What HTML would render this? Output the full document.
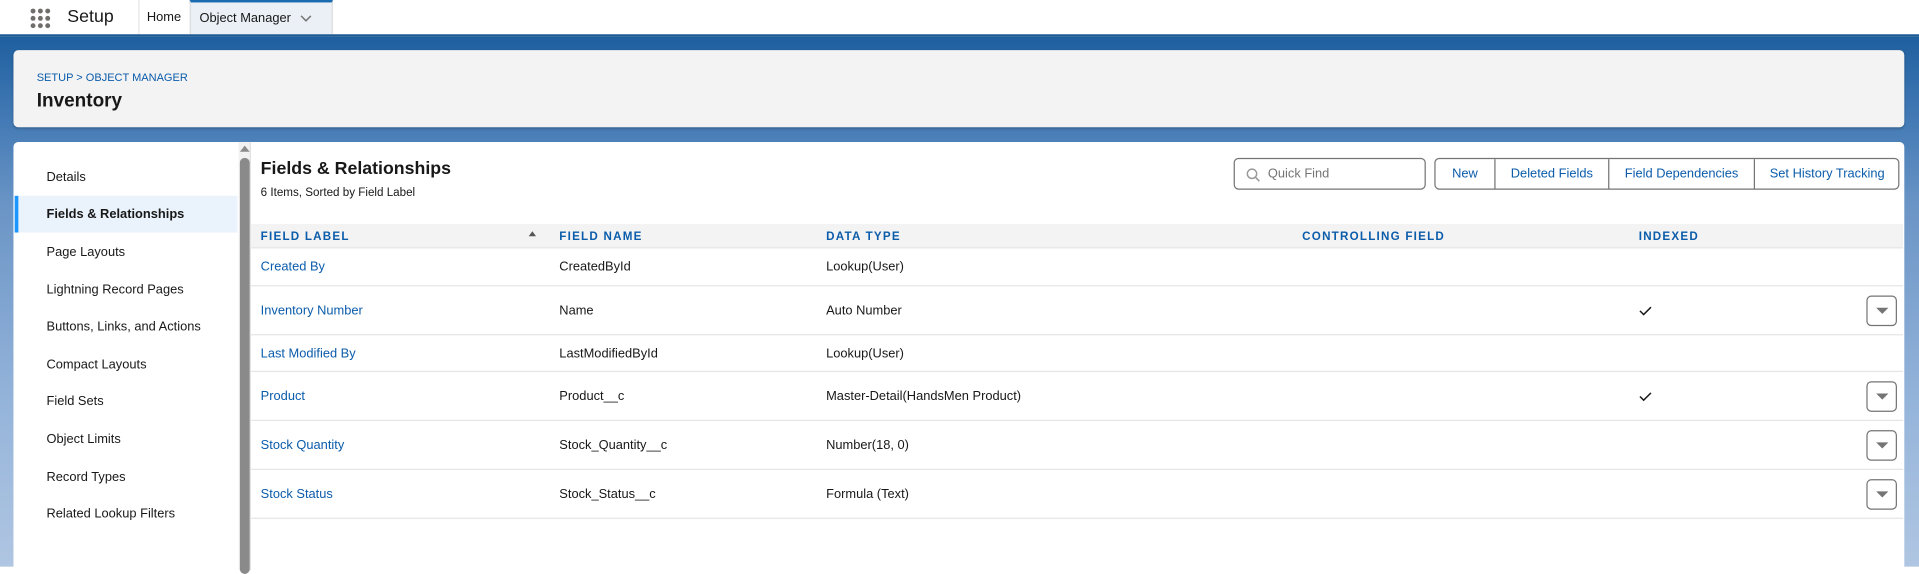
<!DOCTYPE html>
<html><head><meta charset="utf-8"><style>
*{box-sizing:border-box;margin:0;padding:0}
html,body{width:1919px;height:547px;overflow:hidden;background:#fff}
#s{position:absolute;left:0;top:0;width:1568px;height:460px;transform:scale(1.22385);transform-origin:0 0;font-family:"Liberation Sans",sans-serif;color:#181818;font-size:11px}
.a{position:absolute}
.top{left:0;top:0;width:1568px;height:28px;background:#fff}
.bg{left:0;top:28px;width:1568px;height:435px;background:linear-gradient(#1f5f9f 0px,#3f77b3 60px,#6b95c6 140px,#95b4da 300px,#b0c6e2 435px);border-top:2px solid #1d5a92}
.dot{position:absolute;width:4px;height:4px;border-radius:2px;background:#706e6b}
.card{background:#f3f3f3;border-radius:4px;box-shadow:0 1px 2px rgba(0,0,0,.2)}
.lnk{color:#0b5cab}
.side div{position:absolute;left:0;width:182px;height:30px;line-height:30px;padding-left:26px;font-size:10.5px;color:#181818}
.th{position:absolute;top:188px;font-size:9.5px;font-weight:bold;color:#0b5cab;letter-spacing:1px}
.row{position:absolute;left:205px;width:1350px;border-bottom:1px solid #e5e5e5}
.row span{position:absolute;font-size:10.5px;top:50%;transform:translateY(-50%)}
.row svg{position:absolute;left:1134px;top:50%;margin-top:-4px}
.dd{position:absolute;left:1320px;width:25px;height:25px;border:1px solid #747474;border-radius:4px;background:#fff;top:50%;transform:translateY(-50%)}
.dd:after{content:"";position:absolute;left:6.5px;top:9px;border-left:5px solid transparent;border-right:5px solid transparent;border-top:5px solid #747474}
.btn{position:absolute;top:0;height:26px;line-height:24px;text-align:center;color:#0b5cab;font-size:10.5px;border-left:1px solid #747474}
</style></head><body><div id="s">
<div class="a top">
 <div class="a" style="left:25px;top:7px;width:17px;height:17px">
  <div class="dot" style="left:0;top:0"></div><div class="dot" style="left:6px;top:0"></div><div class="dot" style="left:12px;top:0"></div>
  <div class="dot" style="left:0;top:6px"></div><div class="dot" style="left:6px;top:6px"></div><div class="dot" style="left:12px;top:6px"></div>
  <div class="dot" style="left:0;top:12px"></div><div class="dot" style="left:6px;top:12px"></div><div class="dot" style="left:12px;top:12px"></div>
 </div>
 <div class="a" style="left:55px;top:6px;font-size:14.5px;color:#181818">Setup</div>
 <div class="a" style="left:113px;top:0;width:1px;height:28px;background:#e5e5e5"></div>
 <div class="a" style="left:120px;top:8px;font-size:10.5px">Home</div>
 <div class="a" style="left:155px;top:0;width:117px;height:28px;background:#eaf0f5;border-top:2px solid #1b6bb0;border-left:1px solid #ddd;border-right:1px solid #ddd">
  <div class="a" style="left:7px;top:7px;font-size:10.5px">Object Manager</div>
  <svg class="a" style="left:89px;top:9px" width="10" height="8" viewBox="0 0 10 8"><path d="M1 2l4 4 4-4" fill="none" stroke="#747474" stroke-width="1.2"/></svg>
 </div>
</div>
<div class="a bg"></div>
<div class="a card" style="left:11px;top:41px;width:1545px;height:63px">
 <div class="a lnk" style="left:19px;top:17px;font-size:9px">SETUP &gt; OBJECT MANAGER</div>
 <div class="a" style="left:19px;top:33px;font-size:15.5px;font-weight:bold">Inventory</div>
</div>
<div class="a" style="left:11px;top:116px;width:1545px;height:350px;background:#fff;border-radius:4px 4px 0 0"></div>
<div class="a side" style="left:12px;top:0">
 <div style="top:130px">Details</div>
 <div style="top:160px;background:#eaf2fb;font-weight:bold;border-left:3px solid #1b96ff;padding-left:23px">Fields &amp; Relationships</div>
 <div style="top:191px">Page Layouts</div>
 <div style="top:222px">Lightning Record Pages</div>
 <div style="top:252px">Buttons, Links, and Actions</div>
 <div style="top:283px">Compact Layouts</div>
 <div style="top:313px">Field Sets</div>
 <div style="top:344px">Object Limits</div>
 <div style="top:375px">Record Types</div>
 <div style="top:405px">Related Lookup Filters</div>
</div>
<div class="a" style="left:195px;top:116px;width:10px;height:350px;background:#f1f1f1;border-right:1px solid #e0e0e0"></div>
<div class="a" style="left:196px;top:119px;border-left:4px solid transparent;border-right:4px solid transparent;border-bottom:5px solid #8a8a8a"></div>
<div class="a" style="left:196px;top:129px;width:8px;height:340px;background:#8a8a8a;border-radius:4px"></div>
<div class="a" style="left:213px;top:130px;font-size:14.5px;font-weight:bold">Fields &amp; Relationships</div>
<div class="a" style="left:213px;top:152px;font-size:9.5px">6 Items, Sorted by Field Label</div>
<div class="a" style="left:1008px;top:129px;width:157px;height:26px;border:1px solid #747474;border-radius:4px;background:#fff">
 <svg class="a" style="left:9px;top:7px" width="12" height="12" viewBox="0 0 12 12"><circle cx="5" cy="5" r="3.8" fill="none" stroke="#999" stroke-width="1.2"/><path d="M8 8l3 3" stroke="#999" stroke-width="1.3"/></svg>
 <div class="a" style="left:27px;top:6px;font-size:10.5px;color:#747474">Quick Find</div>
</div>
<div class="a" style="left:1172px;top:129px;width:380px;height:26px;border:1px solid #747474;border-radius:4px;background:#fff;overflow:hidden">
 <div class="btn" style="left:-1px;width:49px">New</div>
 <div class="btn" style="left:48px;width:93px">Deleted Fields</div>
 <div class="btn" style="left:141px;width:119px">Field Dependencies</div>
 <div class="btn" style="left:260px;width:119px">Set History Tracking</div>
</div>
<div class="a" style="left:205px;top:183px;width:1350px;height:20px;background:#f3f3f3;border-bottom:1px solid #e5e5e5"></div>
<div class="th" style="left:213px">FIELD LABEL</div>
<div class="a" style="left:432px;top:189px;border-left:3px solid transparent;border-right:3px solid transparent;border-bottom:4px solid #555"></div>
<div class="th" style="left:457px">FIELD NAME</div>
<div class="th" style="left:675px">DATA TYPE</div>
<div class="th" style="left:1064px">CONTROLLING FIELD</div>
<div class="th" style="left:1339px">INDEXED</div>
<div class="row" style="top:203px;height:31px"><span class="lnk" style="left:8px">Created By</span><span style="left:252px">CreatedById</span><span style="left:470px">Lookup(User)</span></div>
<div class="row" style="top:234px;height:40px"><span class="lnk" style="left:8px">Inventory Number</span><span style="left:252px">Name</span><span style="left:470px">Auto Number</span><svg width="11" height="8" viewBox="0 0 11 8"><path d="M1 4l3 3 6-6" fill="none" stroke="#181818" stroke-width="1.2"/></svg><div class="dd"></div></div>
<div class="row" style="top:274px;height:30px"><span class="lnk" style="left:8px">Last Modified By</span><span style="left:252px">LastModifiedById</span><span style="left:470px">Lookup(User)</span></div>
<div class="row" style="top:304px;height:40px"><span class="lnk" style="left:8px">Product</span><span style="left:252px">Product__c</span><span style="left:470px">Master-Detail(HandsMen Product)</span><svg width="11" height="8" viewBox="0 0 11 8"><path d="M1 4l3 3 6-6" fill="none" stroke="#181818" stroke-width="1.2"/></svg><div class="dd"></div></div>
<div class="row" style="top:344px;height:40px"><span class="lnk" style="left:8px">Stock Quantity</span><span style="left:252px">Stock_Quantity__c</span><span style="left:470px">Number(18, 0)</span><div class="dd"></div></div>
<div class="row" style="top:384px;height:40px"><span class="lnk" style="left:8px">Stock Status</span><span style="left:252px">Stock_Status__c</span><span style="left:470px">Formula (Text)</span><div class="dd"></div></div>
</div></body></html>
